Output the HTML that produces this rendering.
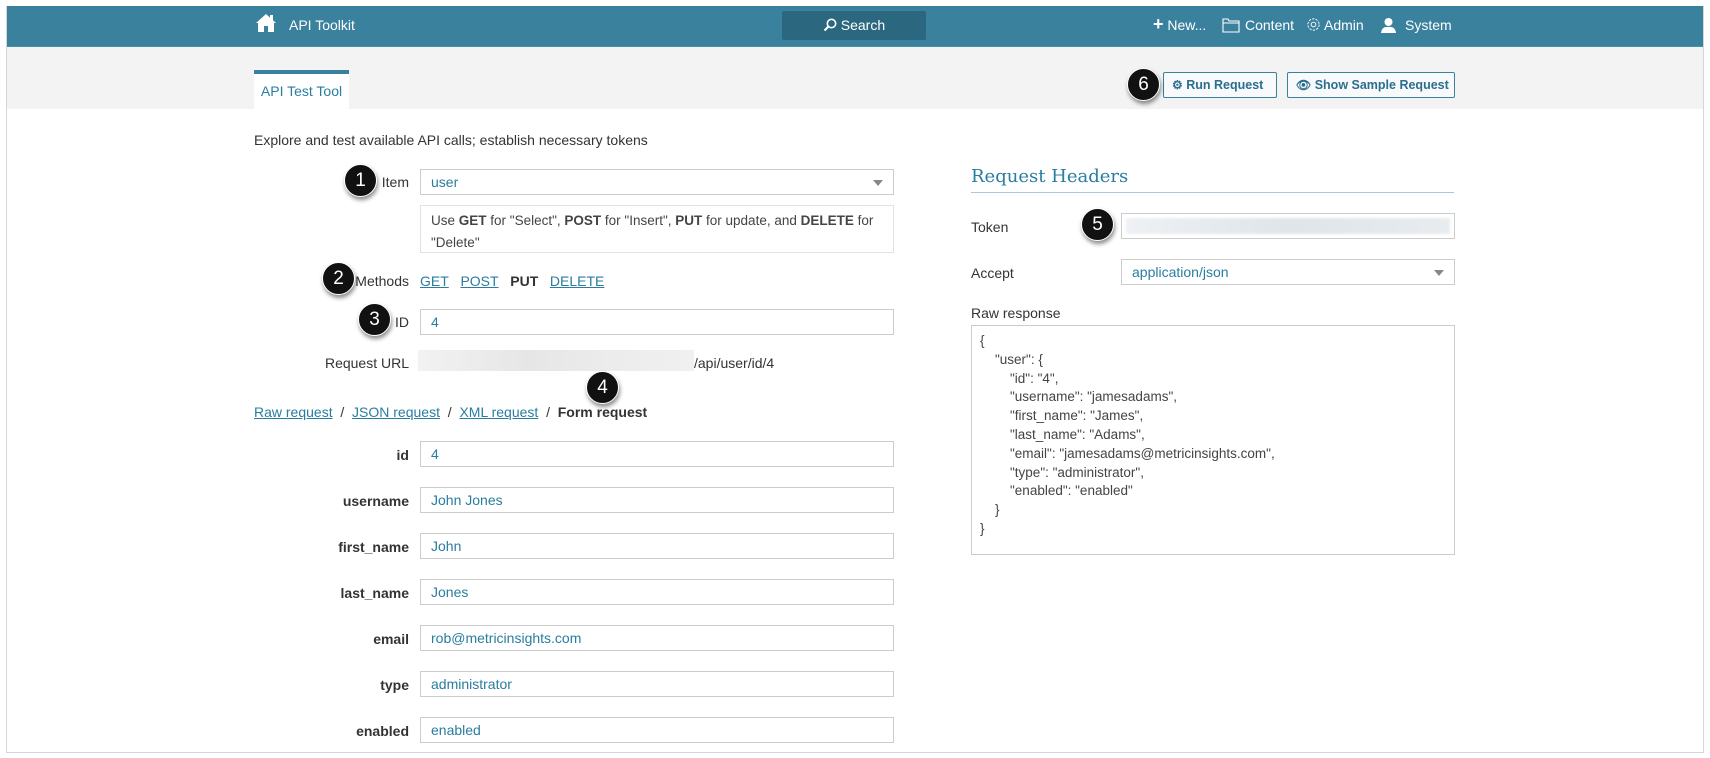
<!DOCTYPE html>
<html><head><meta charset="utf-8"><style>
*{box-sizing:border-box;margin:0;padding:0}
body{width:1710px;height:758px;background:#fff;font-family:"Liberation Sans",sans-serif;font-size:14px;color:#333;position:relative;overflow:hidden}
.abs{position:absolute}
.frame{left:6px;top:6px;width:1698px;height:747px;border:1px solid #d6d6d6;border-top:none}
.hdr{left:7px;top:6px;width:1696px;height:40px;background:#3a819e}
.sub{left:7px;top:46px;width:1696px;height:63px;background:#f3f3f3;border-top:1px solid #4d8fa9}
.ht{color:#fff;font-size:14px;top:17px}
.search{left:782px;top:11px;width:144px;height:29px;background:#2c6780;border-radius:2px;color:#fff;text-align:center;line-height:29px;font-size:14px}
.tab{left:254px;top:70px;width:95px;height:39px;background:#fff;border-top:4px solid #3a819e;color:#2a7da0;font-size:14px;text-align:center;line-height:34px}
.btn{top:72px;height:26px;border:1px solid #3a819e;border-radius:2px;background:#f7f9fa;color:#2a6f8f;font-weight:bold;font-size:12.5px;line-height:24px;padding-left:8px;white-space:nowrap;overflow:hidden}
.badge{width:33px;height:33px;border-radius:50%;background:#111;color:#fff;font-size:19px;text-align:center;line-height:31px;box-shadow:1px 3px 4px rgba(0,0,0,.45);border:1.5px solid #fff}
.inp{border:1px solid #ccc;height:26px;color:#2a7da0;padding-left:10px;line-height:24px;font-size:14px;background:#fff}
.lbl{text-align:right;width:200px;font-size:14px}
.b{font-weight:bold}
a{color:#2a7da0;text-decoration:underline}
.arrow{position:absolute;right:10px;top:10px;border-left:5px solid transparent;border-right:5px solid transparent;border-top:6px solid #888}
.json{font-size:13.5px;line-height:18.8px;color:#444;white-space:pre}
</style></head><body>
<div class="abs frame"></div>
<div class="abs hdr"></div>
<svg class="abs" style="left:255px;top:13px" width="22" height="20" viewBox="0 0 22 20"><path d="M11 1 L1 10 L3 10 L3 19 L9 19 L9 13 L13 13 L13 19 L19 19 L19 10 L21 10 Z" fill="#fff"/><rect x="15" y="2" width="3" height="6" fill="#fff"/></svg>
<div class="abs ht" style="left:289px">API Toolkit</div>
<div class="abs search"><svg style="vertical-align:-2px" width="14" height="14" viewBox="0 0 14 14"><circle cx="8.5" cy="5.5" r="4.2" fill="none" stroke="#fff" stroke-width="1.6"/><path d="M5.5 8.5 L1.5 12.5" stroke="#fff" stroke-width="2"/></svg> Search</div>
<div class="abs ht" style="left:1153px"><b style="font-size:18px;line-height:10px">+</b> New...</div>
<svg class="abs" style="left:1222px;top:18px" width="18" height="15" viewBox="0 0 18 15"><path d="M1 1 H6 L7 3 H17 V14 H1 Z M1 5 H17" fill="none" stroke="#fff" stroke-width="1.1"/></svg>
<div class="abs ht" style="left:1245px">Content</div>
<svg class="abs" style="left:1306px;top:17px" width="15" height="15" viewBox="0 0 16 16"><circle cx="8" cy="8" r="2.5" fill="none" stroke="#fff"/><circle cx="8" cy="8" r="6" fill="none" stroke="#fff" stroke-dasharray="2.5 1.3"/></svg>
<div class="abs ht" style="left:1324px">Admin</div>
<svg class="abs" style="left:1381px;top:17px" width="15" height="16" viewBox="0 0 15 16"><circle cx="7.5" cy="5" r="4" fill="#fff"/><path d="M0 16 Q1 9 7.5 10 Q14 9 15 16Z" fill="#fff"/></svg>
<div class="abs ht" style="left:1405px">System</div>

<div class="abs sub"></div>
<div class="abs tab">API Test Tool</div>
<div class="abs btn" style="left:1163px;width:114px"><span style="font-size:12px">⚙</span> Run Request</div>
<div class="abs btn" style="left:1287px;width:168px"><span style="font-size:12px">👁</span> Show Sample Request</div>
<div class="abs badge" style="left:1127px;top:68px">6</div>

<div class="abs" style="left:254px;top:132px">Explore and test available API calls; establish necessary tokens</div>

<div class="abs lbl" style="left:209px;top:174px">Item</div>
<div class="abs inp" style="left:420px;top:169px;width:474px">user<span class="arrow"></span></div>
<div class="abs" style="left:420px;top:205px;width:474px;height:48px;border:1px solid #e2e2e2;padding:4px 10px;line-height:22px;font-size:13.5px;color:#444">Use <b>GET</b> for "Select", <b>POST</b> for "Insert", <b>PUT</b> for update, and <b>DELETE</b> for "Delete"</div>
<div class="abs lbl" style="left:209px;top:273px">Methods</div>
<div class="abs" style="left:420px;top:273px"><a>GET</a>&nbsp;&nbsp; <a>POST</a>&nbsp;&nbsp; <b>PUT</b>&nbsp;&nbsp; <a>DELETE</a></div>
<div class="abs lbl" style="left:209px;top:314px">ID</div>
<div class="abs inp" style="left:420px;top:309px;width:474px">4</div>
<div class="abs lbl" style="left:209px;top:355px">Request URL</div>
<div class="abs" style="left:418px;top:350px;width:276px;height:21px;background:linear-gradient(90deg,#f2f2f2,#e6e6e6 40%,#ececec 70%,#f0f0f0)"></div>
<div class="abs" style="left:694px;top:355px">/api/user/id/4</div>
<div class="abs" style="left:254px;top:404px"><a>Raw request</a>&nbsp; /&nbsp; <a>JSON request</a>&nbsp; /&nbsp; <a>XML request</a>&nbsp; /&nbsp; <b>Form request</b></div>

<div class="abs lbl b" style="left:209px;top:447px">id</div>
<div class="abs inp" style="left:420px;top:441px;width:474px">4</div>
<div class="abs lbl b" style="left:209px;top:493px">username</div>
<div class="abs inp" style="left:420px;top:487px;width:474px">John Jones</div>
<div class="abs lbl b" style="left:209px;top:539px">first_name</div>
<div class="abs inp" style="left:420px;top:533px;width:474px">John</div>
<div class="abs lbl b" style="left:209px;top:585px">last_name</div>
<div class="abs inp" style="left:420px;top:579px;width:474px">Jones</div>
<div class="abs lbl b" style="left:209px;top:631px">email</div>
<div class="abs inp" style="left:420px;top:625px;width:474px">rob@metricinsights.com</div>
<div class="abs lbl b" style="left:209px;top:677px">type</div>
<div class="abs inp" style="left:420px;top:671px;width:474px">administrator</div>
<div class="abs lbl b" style="left:209px;top:723px">enabled</div>
<div class="abs inp" style="left:420px;top:717px;width:474px">enabled</div>

<div class="abs badge" style="left:344px;top:164px">1</div>
<div class="abs badge" style="left:322px;top:262px">2</div>
<div class="abs badge" style="left:358px;top:303px">3</div>
<div class="abs badge" style="left:586px;top:371px">4</div>

<div class="abs" style="left:971px;top:166px;font-family:'DejaVu Serif','Liberation Serif',serif;font-size:18px;color:#2a7da0">Request Headers</div>
<div class="abs" style="left:971px;top:192px;width:483px;height:1px;background:#a9cbd9"></div>
<div class="abs" style="left:971px;top:219px">Token</div>
<div class="abs inp" style="left:1121px;top:213px;width:334px;padding:4px"><div style="height:16px;background:linear-gradient(90deg,#eef1f4,#dfe5ea 50%,#e8ecef);filter:blur(1px)"></div></div>
<div class="abs badge" style="left:1081px;top:208px">5</div>
<div class="abs" style="left:971px;top:265px">Accept</div>
<div class="abs inp" style="left:1121px;top:259px;width:334px">application/json<span class="arrow"></span></div>
<div class="abs" style="left:971px;top:305px">Raw response</div>
<div class="abs json" style="left:971px;top:325px;width:484px;height:230px;border:1px solid #ccc;padding:6px 8px">{
    "user": {
        "id": "4",
        "username": "jamesadams",
        "first_name": "James",
        "last_name": "Adams",
        "email": "jamesadams@metricinsights.com",
        "type": "administrator",
        "enabled": "enabled"
    }
}</div>
</body></html>
